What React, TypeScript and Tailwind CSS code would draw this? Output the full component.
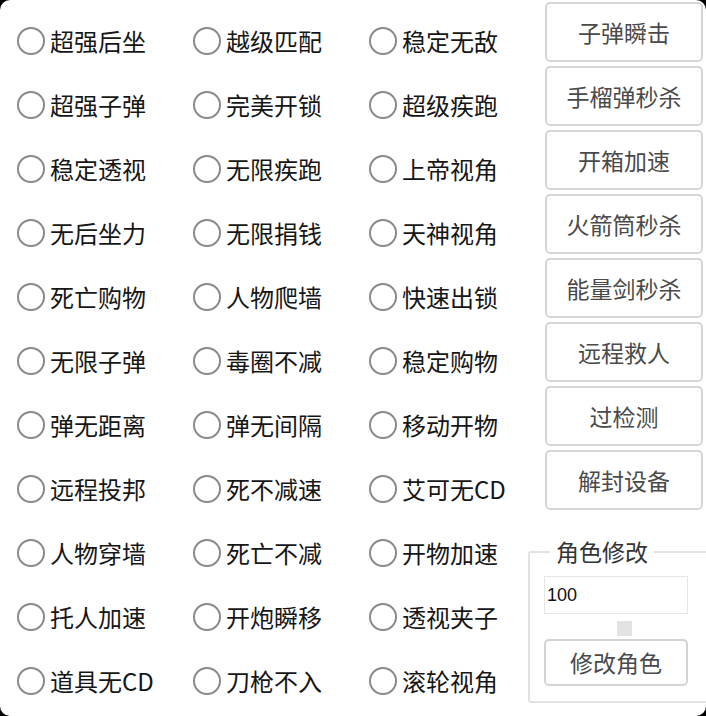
const options = [
  ['超强后坐', '越级匹配', '稳定无敌'],
  ['超强子弹', '完美开锁', '超级疾跑'],
  ['稳定透视', '无限疾跑', '上帝视角'],
  ['无后坐力', '无限捐钱', '天神视角'],
  ['死亡购物', '人物爬墙', '快速出锁'],
  ['无限子弹', '毒圈不减', '稳定购物'],
  ['弹无距离', '弹无间隔', '移动开物'],
  ['远程投邦', '死不减速', '艾可无CD'],
  ['人物穿墙', '死亡不减', '开物加速'],
  ['托人加速', '开炮瞬移', '透视夹子'],
  ['道具无CD', '刀枪不入', '滚轮视角'],
]

const actions = [
  '子弹瞬击',
  '手榴弹秒杀',
  '开箱加速',
  '火箭筒秒杀',
  '能量剑秒杀',
  '远程救人',
  '过检测',
  '解封设备',
]

const font = { fontFamily: '"Noto Sans CJK SC", "Microsoft YaHei", sans-serif' }

function Radio({ label }: { label: string }) {
  return (
    <label className="flex h-16 items-center whitespace-nowrap">
      <span className="h-[28px] w-[28px] shrink-0 rounded-full border-2 border-[#8a8a8a] bg-white" />
      <span className="ml-[5px] text-[24px] leading-none text-[#161616]">{label}</span>
    </label>
  )
}

export default function App() {
  return (
    <div className="h-[716px] w-[706px] bg-black" style={font}>
      <div className="flex h-full w-full overflow-hidden rounded-[10px] bg-white">
        {/* option grid */}
        <div className="grid w-[528px] shrink-0 grid-cols-[176px_176px_159px] content-start pl-[17px] pt-[9px]">
          {options.flat().map((label) => (
            <Radio key={label} label={label} />
          ))}
        </div>

        {/* action buttons + role panel */}
        <div className="flex w-[178px] shrink-0 flex-col">
          <div className="ml-[17px] flex flex-col gap-1 pt-[2px]">
            {actions.map((a) => (
              <button
                key={a}
                className="h-[60px] w-[158px] rounded-[5px] border-2 border-[#d6d6d6] bg-white text-[23px] text-[#4a4a4a]"
              >
                {a}
              </button>
            ))}
          </div>

          <div className="relative mt-[41px] h-[152px] w-[200px] rounded-[3px] border-2 border-[#e2e2e2]">
            <span className="absolute -top-[16px] left-[20px] bg-white px-[6px] text-[23px] leading-[28px] text-[#333]">
              角色修改
            </span>
            <input
              defaultValue="100"
              className="ml-[14px] mt-[23px] block h-[38px] w-[144px] border border-[#e6e6e6] pl-[2px] text-[18px] text-[#111] outline-none"
              style={{ fontFamily: '"Liberation Sans", sans-serif' }}
            />
            <div className="ml-[87px] mt-[7px] h-[15px] w-[15px] bg-[#e3e3e3]" />
            <button className="ml-[14px] mt-[3px] h-[47px] w-[144px] rounded-[5px] border-2 border-[#d4d4d4] bg-white text-[23px] text-[#4a4a4a]">
              修改角色
            </button>
          </div>
        </div>
      </div>
    </div>
  )
}
